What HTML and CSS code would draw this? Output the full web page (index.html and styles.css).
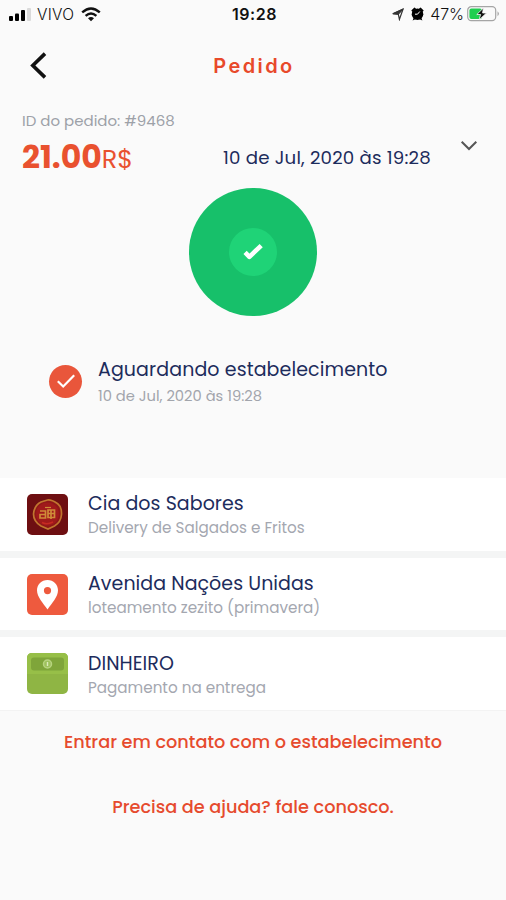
FILE: index.html
```html
<!DOCTYPE html>
<html lang="pt-BR">
<head>
    <meta charset="utf-8">
    <meta name="viewport" content="width=device-width, initial-scale=1">
    <title>Pedido</title>
    <link rel="stylesheet" href="styles.css">
</head>
<body>
    <div class="status-bar">
        <div class="carrier">
            <svg width="23" height="13" viewBox="0 0 23 13">
                <rect x="0" y="8" width="4" height="5" rx="1"/>
                <rect x="6" y="5.5" width="4" height="7.5" rx="1"/>
                <rect x="12" y="2" width="4" height="11" rx="1"/>
                <rect x="18" y="0" width="4" height="13" rx="1" fill="#dadada"/>
            </svg>
            <span class="carrier-name">VIVO</span>
            <svg width="20" height="15" viewBox="0 0 20 15" fill="none" stroke="#111" stroke-width="2.4">
                <path d="M1.2 5.4Q10 -2.6 18.8 5.4"/>
                <path d="M4.6 8.8Q10 4.2 15.4 8.8"/>
                <path d="M7 11.2Q10 8.8 13 11.2L10 14.3Z" fill="#111" stroke="none"/>
            </svg>
        </div>
        <span class="clock">19:28</span>
        <div class="indicators">
            <svg width="12" height="13" viewBox="0 0 12 13" fill="none" stroke="#333" stroke-width="1.2">
                <path d="M.8 5.7L11 1.2L7.4 11.4L6.3 6.1Z"/>
                <path d="M1 5.7L11 1.2L6.3 6.1Z" fill="#333"/>
            </svg>
            <svg class="alarm" width="13" height="14" viewBox="0 0 13 14">
                <circle cx="6.5" cy="7.2" r="5.8"/>
                <path d="M.3 3.4L3.4.5L5 1.6L1.4 5ZM12.7 3.4L9.6.5L8 1.6L11.6 5ZM1.6 13.5L3 10.5L5 12ZM11.4 13.5L10 10.5L8 12Z"/>
                <path d="M8.8 4.5L6.5 7.2H4" fill="none" stroke="#fff" stroke-width="1"/>
            </svg>
            <span class="percent">47%</span>
            <svg class="battery" width="33" height="16" viewBox="0 0 33 16">
                <rect x=".7" y=".7" width="28" height="14" rx="3.6" fill="none" stroke="#a5a5a5" stroke-width="1.2"/>
                <path d="M30.5 5.2Q33.4 7.7 30.5 10.2Z" fill="#a5a5a5"/>
                <rect x="2.4" y="2.4" width="12.6" height="10.6" rx="2" fill="#1fce50"/>
                <path d="M16.4 2L9.8 8.5H13.6L12 14L19.5 7H15.6Z" fill="#111" stroke="#fafafa" stroke-width=".8"/>
            </svg>
        </div>
    </div>

    <header class="header">
        <svg class="back" width="18" height="28" viewBox="0 0 18 28" fill="none" stroke="#111" stroke-width="3.6">
            <path d="M16 1.6L3.8 13.5L16 25.4"/>
        </svg>
        <h1>Pedido</h1>
    </header>

    <section class="summary">
        <div class="order-id">ID do pedido: #9468</div>
        <div class="summary-row">
            <div class="price"><b>21.00</b><span>R$</span></div>
            <div class="order-date">10 de Jul, 2020 às 19:28</div>
            <svg class="chevron" width="18" height="12" viewBox="0 0 18 12" fill="none" stroke="#555" stroke-width="2">
                <path d="M1.7 1.7L9 9L16.3 1.7"/>
            </svg>
        </div>
    </section>

    <div class="progress">
        <div class="progress-inner">
            <svg width="20" height="18" viewBox="0 0 20 18" fill="none" stroke="#fff" stroke-width="4.6">
                <path d="M2.1 9.4L6.4 13.8L18.2 2.6" stroke-linejoin="round"/>
            </svg>
        </div>
    </div>

    <section class="step">
        <div class="step-icon">
            <svg width="20" height="16" viewBox="0 0 20 16" fill="none" stroke="#fff" stroke-width="2.2">
                <path d="M1.8 7.3L7.2 12.5L18.2 1.2"/>
            </svg>
        </div>
        <div>
            <div class="step-title">Aguardando estabelecimento</div>
            <div class="step-date">10 de Jul, 2020 às 19:28</div>
        </div>
    </section>

    <section class="cards">
        <div class="card">
            <svg class="card-icon" viewBox="0 0 41 41">
                <rect width="41" height="41" rx="5" fill="#6e0f12"/>
                <path d="M20.5 6C25 5.500 28 8 31 10C35 13 34.500 17 34.500 20.500C34 27 31 30 27.500 32L21 35L14 32C9 29 6.500 25 6.500 20C7 14 10 10 14 8Z" fill="#8f1718" stroke="#c0762f" stroke-width="1.7"/>
                <circle cx="20.5" cy="20" r="11.5" fill="#a01a1b"/>
                <g fill="none" stroke="#cf8b38" stroke-width="1.7">
                    <path d="M13 17H18.500V24H13V20.500H18M21 16V23.500H27.500V16ZM21 19.500H27.500M24 16V25"/>
                    <path d="M18 13.500H24" stroke-width="1.2"/>
                </g>
                <path d="M15 28.500Q20 31 26 28" fill="none" stroke="#c62a22" stroke-width="1.5"/>
            </svg>
            <div>
                <div class="card-title">Cia dos Sabores</div>
                <div class="card-text">Delivery de Salgados e Fritos</div>
            </div>
        </div>
        <div class="card">
            <svg class="card-icon" viewBox="0 0 41 41">
                <rect width="41" height="41" rx="5" fill="#ee5a3e"/>
                <path d="M20.5 6C14.5 6 10 10.5 10 16.3C10 23 16 29 20.5 35.5C25 29 31 23 31 16.3C31 10.5 26.5 6 20.5 6ZM20.5 13A3.6 3.6 0 1 1 20.5 20.2A3.6 3.6 0 1 1 20.5 13Z" fill="#fff"/>
            </svg>
            <div>
                <div class="card-title">Avenida Nações Unidas</div>
                <div class="card-text">loteamento zezito (primavera)</div>
            </div>
        </div>
        <div class="card">
            <svg class="card-icon" viewBox="0 0 41 41">
                <rect width="41" height="41" rx="5" fill="#8fb544"/>
                <path d="M0 21V5Q0 0 5 0H36Q41 0 41 5V21Z" fill="#97bf48"/>
                <rect x="4" y="4.5" width="33" height="13" rx="3" fill="#7fa53a"/>
                <circle cx="20.5" cy="11" r="4" fill="#9dc15b" stroke="#b7d37f" stroke-width="1.5"/>
                <path d="M20.5 9V13" stroke="#dcebbd" stroke-width="1.4"/>
            </svg>
            <div>
                <div class="card-title">DINHEIRO</div>
                <div class="card-text">Pagamento na entrega</div>
            </div>
        </div>
    </section>

    <div class="links">
        <a>Entrar em contato com o estabelecimento</a>
        <a>Precisa de ajuda? fale conosco.</a>
    </div>
</body>
</html>
```
FILE: styles.css
```css
* {
    box-sizing: border-box;
}

body {
    margin: 0;
    height: 900px;
    background-color: #fafafa;
    font-family: Poppins, Inter, "Open Sans", sans-serif;
    white-space: nowrap;
    overflow: hidden;
}

svg {
    display: block;
    flex: none;
}

.status-bar {
    display: grid;
    grid-template-columns: 1fr auto 1fr;
    align-items: center;
    height: 28px;
    padding: 0 6px 0 9px;
    color: #111;
    font-family: Inter, sans-serif;
}

.carrier {
    display: flex;
    align-items: center;
}

.carrier-name {
    width: 38px;
    margin: 0 6px 0 5px;
    font-size: 15.5px;
    font-weight: 300;
    letter-spacing: 0.3px;
}

.clock {
    font-size: 16px;
    font-weight: 600;
    letter-spacing: 0.5px;
}

.indicators {
    display: flex;
    align-items: center;
    justify-content: flex-end;
}

.alarm {
    margin: 0 6px 0 7px;
}

.percent {
    font-size: 16px;
    font-weight: 300;
    letter-spacing: -0.1px;
}

.battery {
    margin-left: 3px;
}

.header {
    display: grid;
    grid-template-columns: 1fr auto 1fr;
    align-items: center;
    height: 76px;
    padding: 0 27px 0 29px;
}

h1 {
    margin: 0;
    color: #e8492a;
    font-family: Inter, sans-serif;
    font-size: 20px;
    font-weight: 600;
    letter-spacing: 2.4px;
}

.summary {
    height: 84px;
    padding: 7px 28px 0 22px;
}

.order-id {
    color: #9da1a8;
    font-size: 15px;
    line-height: 20px;
}

.summary-row {
    display: flex;
    align-items: center;
    margin-top: 6px;
    height: 40px;
}

.price {
    display: flex;
    align-items: baseline;
    width: 201px;
    color: #e9512f;
}

.price b {
    font-size: 31.5px;
}

.price span {
    font-size: 25.5px;
}

.order-date {
    color: #1d2c5c;
    font-size: 18.2px;
    letter-spacing: 0.2px;
}

.chevron {
    margin: -22px 0 0 auto;
}

.progress {
    display: flex;
    align-items: center;
    justify-content: center;
    width: 128px;
    height: 128px;
    margin: 0 auto;
    border-radius: 50%;
    background-color: #17c06a;
}

.progress-inner {
    display: flex;
    align-items: center;
    justify-content: center;
    width: 48px;
    height: 48px;
    border-radius: 50%;
    background-color: #1fd377;
}

.step {
    display: flex;
    align-items: center;
    height: 162px;
    padding: 0 0 31px 49px;
}

.step-icon {
    display: flex;
    align-items: center;
    justify-content: center;
    width: 33px;
    height: 33px;
    margin-right: 16px;
    border-radius: 50%;
    background-color: #e9563b;
}

.step-title {
    padding-top: 1px;
    color: #1d2c5c;
    font-size: 19px;
    letter-spacing: 0.1px;
    line-height: 28px;
}

.step-date {
    color: #a2a5ac;
    font-size: 14.7px;
    line-height: 25px;
}

.cards {
    display: flex;
    flex-direction: column;
    gap: 7px;
    background-color: #f4f5f5;
}

.card {
    display: flex;
    align-items: center;
    height: 72.7px;
    padding-left: 27px;
    background-color: #fff;
}

.card-icon {
    width: 41px;
    height: 41px;
    margin-right: 20px;
}

.card-title {
    padding-top: 2px;
    color: #1d2c5c;
    font-size: 19px;
    letter-spacing: 0.05px;
    line-height: 26px;
}

.card-text {
    color: #a4a7b0;
    font-size: 15.2px;
    line-height: 22px;
}

.links {
    display: flex;
    flex-direction: column;
    align-items: center;
    gap: 41px;
    padding-top: 19px;
    border-top: 1px solid #f3f3f3;
    color: #e64b2e;
    font-size: 17.7px;
    font-weight: 500;
    line-height: 24px;
}
```
